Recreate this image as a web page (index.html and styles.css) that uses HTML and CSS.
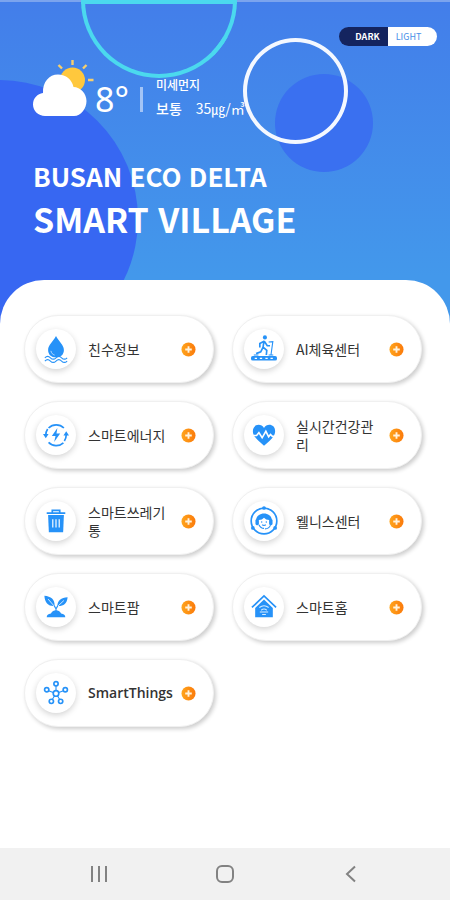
FILE: index.html
```html
<!DOCTYPE html>
<html lang="ko">
<head>
<meta charset="utf-8">
<meta name="viewport" content="width=device-width, initial-scale=1">
<title>Busan Eco Delta Smart Village</title>
<link rel="stylesheet" href="styles.css">
</head>
<body>
<svg class="defs" aria-hidden="true">
  <defs>
    <linearGradient id="orange" x1="0" x2="1"><stop offset="0" stop-color="#ffa51c"/><stop offset="1" stop-color="#fb7a0b"/></linearGradient>
    <symbol id="plus" viewBox="0 0 16 16"><circle cx="8" cy="8" r="7.5" fill="url(#orange)"/><path d="M8 4.500v7M4.500 8h7" stroke="#fff3dc" stroke-width="2"/></symbol>
  </defs>
</svg>
<div class="screen">
  <header class="hero">
    <div class="shape shape-left"></div>
    <div class="shape shape-half"></div>
    <div class="shape shape-dot"></div>
    <div class="shape shape-ring"></div>
    <div class="theme" role="group" aria-label="Theme">
      <button class="theme-dark" type="button">DARK</button>
      <button class="theme-light" type="button">LIGHT</button>
    </div>
    <div class="weather">
      <svg class="weather-icon" viewBox="0 0 62 58" aria-hidden="true">
        <path d="M39.500 0v5M25.500 5l3.500 3.500M53.500 5l-3.500 3.500M55 20h5.500" stroke="#f7cf6d" stroke-width="2.400"/>
        <circle cx="39.500" cy="20" r="12.500" fill="#ffc83d"/>
        <path d="M12 56C5.500 56 0 51 0 44.500S4.500 34 10 33C9.500 22 16 14.500 25 14.500c8 0 14 5 15.500 12.500 7 0 13 6.500 13 14S48 56 41 56z" fill="#fff"/>
      </svg>
      <span class="temperature">8°</span>
      <span class="divider"></span>
      <div class="dust">
        <div class="dust-title">미세먼지</div>
        <div class="dust-value"><span class="dust-level">보통</span><span>35㎍/㎥</span></div>
      </div>
    </div>
    <h1 class="title"><span class="title-small">BUSAN ECO DELTA</span><span class="title-large">SMART VILLAGE</span></h1>
  </header>
  <main class="sheet">
    <div class="menu">
      <a class="card" href="#water">
        <span class="badge"><svg viewBox="0 0 28 28"><path d="M14 0c3 6 8.500 9.500 8.500 15 0 5-3.500 8-8.500 8s-8.500-3-8.500-8C5.500 9.500 11 6 14 0z"/><path d="M8.500 16c.5 2.500 2 4 4 4.500" fill="none" stroke="#bfe0ff" stroke-width="1"/><path class="line" d="M2 23.500q3-3 6 0t6 0 6 0 6 0M2 27q3-3 6 0t6 0 6 0 6 0"/></svg></span>
        <span class="label">친수정보</span><svg class="plus"><use href="#plus"/></svg>
      </a>
      <a class="card" href="#sports">
        <span class="badge"><svg viewBox="0 0 28 28"><circle cx="15" cy="1.500" r="2.200"/><path class="thick" d="M14 5l-1 7 4 3.500-.5 5M13 12l-2.500 5-5 2M13.500 6L9.500 8v4.500M14.500 6l3 4.500h3"/><path class="line" d="M19 6.500l4.500-.5-2 14.500M3 20.500h5M19 20.500h5"/><rect x="0" y="21.500" width="28" height="5" rx="2"/><path d="M4 24h2.500M9.500 24h2.500M15.500 24h2.500M21 24h2.500" stroke="#fff" stroke-width="1.300"/></svg></span>
        <span class="label">AI체육센터</span><svg class="plus"><use href="#plus"/></svg>
      </a>
      <a class="card" href="#energy">
        <span class="badge"><svg viewBox="0 0 28 28"><path class="thick" d="M6 6.500A11.500 11.500 0 0 1 22.500 6.500M3 14Q3 10.500 5 7.500M22 22.500a11.500 11.500 0 0 1-16-.5M25 14q0 3.500-2 6.500"/><path d="M0 13h6l-3 4.500zM22 14.500h6l-3-4.500zM15.500 6.500L9.500 15h4l-1.500 6.500 6.500-9h-4z"/></svg></span>
        <span class="label">스마트에너지</span><svg class="plus"><use href="#plus"/></svg>
      </a>
      <a class="card" href="#health">
        <span class="badge"><svg viewBox="0 0 28 28"><path d="M14 25.500C8 20.500 2 16 2 10c0-8 9-9 12-3.500C17 1 26 2 26 10c0 6-6 10.500-12 15.500z"/><path d="M2 14.500h4l2.500-3 3.500 5.500 4-7 3 6 2-2.500 2 2h3" fill="none" stroke="#fff" stroke-width="1.700"/></svg></span>
        <span class="label">실시간건강관리</span><svg class="plus"><use href="#plus"/></svg>
      </a>
      <a class="card" href="#trash">
        <span class="badge"><svg viewBox="0 0 28 28"><path class="thick" d="M4 5.500h20M10 5V2.500h8V5"/><path d="M5.500 7.500h17l-.8 18.500H6.300z"/><path d="M10.500 12v9M14 12v9M17.500 12v9" stroke="#d9edff" stroke-width="1.500"/></svg></span>
        <span class="label">스마트쓰레기통</span><svg class="plus"><use href="#plus"/></svg>
      </a>
      <a class="card" href="#wellness">
        <span class="badge"><svg viewBox="0 0 28 28"><circle class="thick" cx="14" cy="14" r="13.800"/><circle cx="14" cy="0" r="2"/><circle cx="2" cy="21.500" r="2"/><circle cx="26" cy="21.500" r="2"/><path d="M5.500 13C6 3.500 22 3.500 22.500 13h-3Q16 13 14 10.500 12 13 8.500 13z"/><rect x="4.800" y="12" width="3.700" height="6.500" rx="1.500"/><rect x="19.500" y="12" width="3.700" height="6.500" rx="1.500"/><path class="line" d="M8.500 18q2 4 5.500 4M21 18.500q-1.500 4-6 4M12 18q2 1.500 4 0"/><circle cx="11.500" cy="15" r=".8"/><circle cx="16.500" cy="15" r=".8"/></svg></span>
        <span class="label">웰니스센터</span><svg class="plus"><use href="#plus"/></svg>
      </a>
      <a class="card" href="#farm">
        <span class="badge"><svg viewBox="0 0 28 28"><path d="M1.500 2C8.500 2.500 13 6 12.500 13 6 13.500 2 10 1.500 2zM26.500 3.500C19.500 3.500 15.500 7.500 15.500 13c6 .5 10.500-2.500 11-9.500z"/><path d="M5.500 5.500l7 8M22.500 7l-7 6.500" stroke="#d9edff" stroke-width="1"/><path class="line" d="M12 12.500l2 3.500 2-3.500M14 15v5"/><path d="M4 25q0-3.500 4.500-4 2-3.500 5.500-3.500t5.500 3.500q4.500.5 4.500 4z"/></svg></span>
        <span class="label">스마트팜</span><svg class="plus"><use href="#plus"/></svg>
      </a>
      <a class="card" href="#home">
        <span class="badge"><svg viewBox="0 0 28 28"><path class="thick" d="M1 14.500L14 2l13 12.500"/><path d="M4.500 15L14 6l9.500 9v10h-19z"/><path d="M9 14.500q5-3.500 10 0M11 17.500q3-2.500 6 0M9.500 19.500h9M12 22h4" fill="none" stroke="#d9edff" stroke-width="1.100"/></svg></span>
        <span class="label">스마트홈</span><svg class="plus"><use href="#plus"/></svg>
      </a>
      <a class="card" href="#smartthings">
        <span class="badge"><svg viewBox="0 0 28 28"><path class="line" d="M14 11V6.500M11 13.500l-5-2M17 13.500l5-2M12.500 17l-2.500 4M15.500 17l2.500 4"/><circle class="thick" cx="14" cy="14.500" r="3"/><circle class="thick" cx="14" cy="4" r="2.300"/><circle class="thick" cx="4" cy="10.500" r="2.300"/><circle class="thick" cx="24" cy="10.500" r="2.300"/><circle class="thick" cx="9" cy="23" r="2.300"/><circle class="thick" cx="19" cy="23" r="2.300"/></svg></span>
        <span class="label label-latin">SmartThings</span><svg class="plus"><use href="#plus"/></svg>
      </a>
    </div>
  </main>
  <nav class="system" aria-label="System">
    <button type="button" aria-label="Recent apps"><svg viewBox="0 0 20 20"><path d="M3 2v16M10 2v16M17 2v16"/></svg></button>
    <button type="button" aria-label="Home"><svg viewBox="0 0 20 20"><rect x="2" y="2" width="16" height="16" rx="5"/></svg></button>
    <button type="button" aria-label="Back"><svg viewBox="0 0 20 20"><path d="M14 2.500L6 10l8 7.500"/></svg></button>
  </nav>
</div>
</body>
</html>
```
FILE: styles.css
```css
* { box-sizing: border-box; }

body {
  margin: 0;
  font-family: "Noto Sans CJK KR", "Noto Sans", sans-serif;
  color: #333;
  background: #fff;
}

button { border: 0; margin: 0; font: inherit; }

.defs { position: absolute; width: 0; height: 0; }

.screen { display: flex; flex-direction: column; min-height: 100vh; }

.hero {
  position: relative;
  overflow: hidden;
  padding: 27px 13px 82px 33px;
  background: linear-gradient(#7ba4ee 2px, #437eea 2px, #4398eb 85%);
  color: #fff;
}

/* Decorative background */
.shape { position: absolute; border-radius: 50%; }
.shape-left { left: -140px; top: 80px; width: 278px; height: 278px; background: #3767f2; }
.shape-half {
  left: 81px; top: 0; width: 156px; height: 78px;
  border: 4px solid #4bd9ee;
  border-radius: 0 0 78px 78px;
}
.shape-dot { left: 275px; top: 74px; width: 98px; height: 98px; background: #3a70f0; }
.shape-ring { left: 243px; top: 38px; width: 105px; height: 106px; border: 4px solid #f4f8ff; }

.theme {
  position: relative;
  display: flex;
  width: 98px;
  height: 19px;
  margin-left: auto;
  border-radius: 10px;
  overflow: hidden;
  font-size: 9px;
  line-height: 19px;
}
.theme button { flex: 1; padding: 0; }
.theme .theme-dark { padding-left: 8px; background: #14245f; color: #fff; font-weight: 700; }
.theme .theme-light { padding-right: 8px; background: #fff; color: #4a90e8; }

.weather { position: relative; display: flex; height: 58px; margin-top: 14px; }
.weather-icon { width: 62px; height: 58px; }
.temperature {
  width: 45px;
  padding-top: 16px;
  font-family: "Noto Sans", sans-serif;
  font-size: 34px;
  line-height: 46px;
}
.divider { width: 3px; height: 25px; margin-top: 27px; background: #a3c4f6; }
.dust { margin-left: 13px; padding-top: 16px; }
.dust-title { font-size: 12px; line-height: 18px; font-weight: 500; }
.dust-value { display: flex; gap: 14px; margin-top: 4px; font-size: 14px; line-height: 20px; }
.dust-level { font-weight: 500; }

.title { position: relative; margin: 38px 0 0; font-weight: 700; }
.title span { display: block; }
.title-small { font-size: 26px; line-height: 40px; }
.title-large { font-size: 34px; line-height: 46px; }

.sheet {
  position: relative;
  flex: 1;
  margin-top: -44px;
  padding: 35px 28px 24px 24px;
  border-radius: 44px 44px 0 0;
  background: #fff;
}

.menu { display: grid; grid-template-columns: 1fr 1fr; gap: 18px; }

.card {
  display: flex;
  align-items: center;
  height: 68px;
  padding: 0 17px 0 11px;
  border: 1px solid #f0f0f0;
  border-radius: 34px;
  background: #fff;
  box-shadow: 2px 2px 4px rgba(0, 0, 0, 0.2);
  color: #333;
  text-decoration: none;
}
.badge {
  display: flex;
  flex: none;
  align-items: center;
  justify-content: center;
  width: 40px;
  height: 40px;
  border-radius: 50%;
  box-shadow: 0 2px 6px rgba(0, 0, 0, 0.18);
}
.badge svg { width: 26px; height: 26px; overflow: visible; fill: #2692f8; }
.badge .line, .badge .thick { fill: none; stroke: #2692f8; stroke-width: 1.2; }
.badge .thick { stroke-width: 1.8; }
.label { flex: 1; min-width: 0; margin: 0 12px; font-size: 14px; line-height: 18px; word-break: break-all; }
.label-latin {
  margin-right: 0;
  font-family: "Open Sans", sans-serif;
  font-weight: 600;
  white-space: nowrap;
}
.plus { flex: none; width: 15px; height: 15px; }

.system {
  display: flex;
  justify-content: center;
  gap: 106px;
  padding: 16px 0;
  background: #f1f1f1;
}
.system button { width: 20px; height: 20px; padding: 0; background: none; }
.system svg { display: block; width: 20px; height: 20px; fill: none; stroke: #828282; stroke-width: 2; }
```
